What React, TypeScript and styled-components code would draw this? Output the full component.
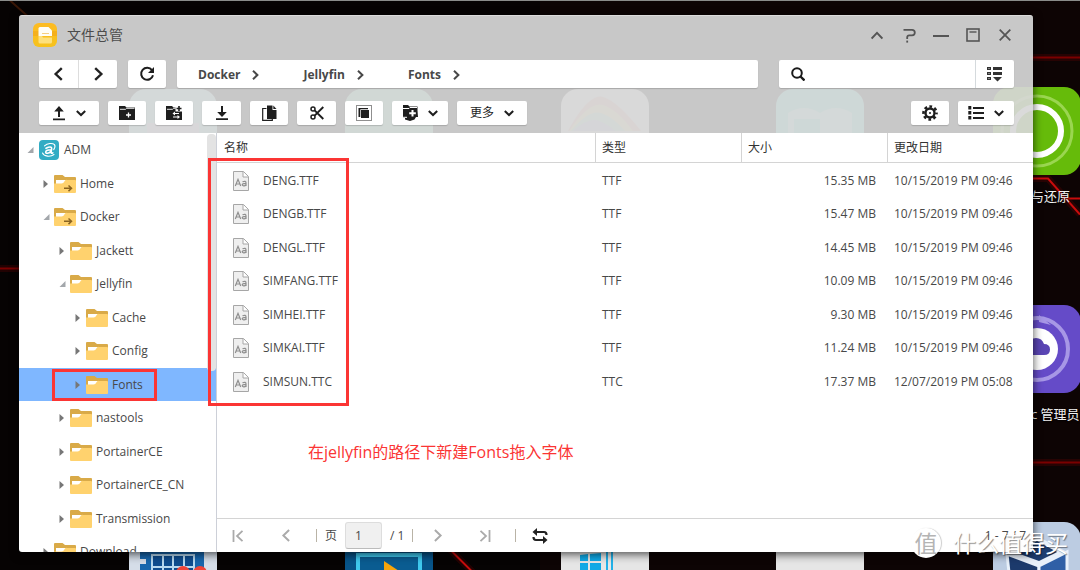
import React from "react";
import styled, { createGlobalStyle, css } from "styled-components";

const GlobalStyle = createGlobalStyle`
  *, *::before, *::after { box-sizing: border-box; }
  html, body, #root { height: 100%; }
  body {
    margin: 0;
    overflow: hidden;
    background: #060303;
    color: #484848;
    font: 12px/16px "Open Sans", "Noto Sans CJK SC", sans-serif;
  }
  button, input { font: inherit; color: inherit; }
  button { border: 0; padding: 0; background: none; cursor: pointer; }
  svg { display: block; flex: none; }
  ul { list-style: none; margin: 0; padding: 0; }
`;

/* ---------- Desktop ---------- */

const Desktop = styled.main`
  position: relative;
  height: 100vh;
  overflow: hidden;
  border-top: 1px solid #8a8c8a;
`;

const Wallpaper = styled.svg`
  position: absolute;
  inset: 0;
  width: 100%;
  height: 100%;
`;

const Shortcut = styled.div<{ $left: number; $top: number }>`
  position: absolute;
  left: ${(p) => p.$left}px;
  top: ${(p) => p.$top}px;
  width: 88px;
`;

const ShortcutLabel = styled.span<{ $indent: number }>`
  display: block;
  padding: 12px 0 0 ${(p) => p.$indent}px;
  font-size: 13px;
  line-height: 18px;
  white-space: nowrap;
  color: #f2f2f2;
  text-shadow: 0 1px 2px #000;
`;

/* ---------- Window ---------- */

const Window = styled.section`
  position: absolute;
  inset: 14px 47px 18px 19px;
  display: flex;
  flex-direction: column;
  border-radius: 3px;
  box-shadow: 0 2px 10px rgba(0, 0, 0, 0.7);
`;

const Header = styled.header`
  padding: 0 19px 8px 20px;
  border-radius: 3px 3px 0 0;
  border-top: 1px solid #dcdcdc;
  background: rgba(215, 215, 215, 0.93);
`;

const TitleBar = styled.div`
  display: flex;
  align-items: center;
  height: 44px;
  padding-bottom: 6px;
  margin: 0 -3px 0 -6px;
`;

const Title = styled.h1`
  flex: 1;
  margin: 0 0 0 10px;
  font-size: 14px;
  line-height: 20px;
  font-weight: 400;
  color: #4c4c4c;
`;

const Controls = styled.div`
  display: flex;
  gap: 8px;
`;

const ControlButton = styled.button`
  display: flex;
  align-items: center;
  justify-content: center;
  width: 24px;
  height: 24px;
  color: #555;
`;

const NavRow = styled.div`
  display: flex;
  gap: 11px;
  height: 28px;
  margin-bottom: 13px;
`;

const raised = css`
  background: #fff;
  border-radius: 2px;
  box-shadow: 0 1px 1px rgba(0, 0, 0, 0.16);
`;

const ButtonPair = styled.div`
  display: flex;
  ${raised}
`;

const PairButton = styled.button`
  display: flex;
  align-items: center;
  justify-content: center;
  width: 39px;
  color: #222;
  & + & { border-left: 1px solid #ddd; }
`;

const ToolButton = styled.button<{ $width?: number }>`
  display: flex;
  align-items: center;
  justify-content: center;
  gap: 10px;
  width: ${(p) => p.$width ?? 38}px;
  color: #1e1e1e;
  ${raised}
`;

const Breadcrumb = styled.nav`
  display: flex;
  align-items: center;
  flex: 1;
  gap: 43px;
  padding: 2px 0 0 21px;
  ${raised}
`;

const Crumb = styled.a`
  display: flex;
  align-items: center;
  gap: 10px;
  font-weight: 700;
  color: #484848;
  text-decoration: none;
`;

const Search = styled.form`
  display: flex;
  align-items: center;
  width: 235px;
  margin-left: 10px;
  padding-left: 12px;
  ${raised}
`;

const SearchInput = styled.input`
  flex: 1;
  min-width: 0;
  height: 28px;
  padding: 0 8px;
  border: 0;
  outline: 0;
  background: none;
`;

const SearchOptions = styled.button`
  display: flex;
  align-items: center;
  justify-content: center;
  width: 39px;
  height: 28px;
  border-left: 1px solid #d5dadd;
`;

const ToolRow = styled.div`
  display: flex;
  gap: 9px;
  height: 24px;
`;

const Spacer = styled.div`
  flex: 1;
`;

const Body = styled.div`
  display: flex;
  flex: 1;
  min-height: 0;
  overflow: hidden;
  border-radius: 0 0 3px 3px;
  background: #fff;
`;

/* ---------- Sidebar ---------- */

const Sidebar = styled.aside`
  position: relative;
  width: 198px;
  flex: none;
  overflow: hidden;
  border-right: 1px solid #cdd0d8;
`;

const ScrollThumb = styled.div`
  position: absolute;
  top: 1px;
  right: 0;
  width: 9px;
  height: 237px;
  border-radius: 4px;
  background: #e3e3e3;
`;

const TreeItem = styled.li<{ $level: number; $selected?: boolean }>`
  position: relative;
  display: flex;
  align-items: center;
  height: 33px;
  padding-left: ${(p) => 3 + p.$level * 16}px;
  background: ${(p) => (p.$selected ? "#7fb7ff" : "none")};
  &:nth-child(odd) { height: 34px; }
`;

const Toggle = styled.button`
  display: flex;
  align-items: center;
  justify-content: center;
  width: 16px;
  height: 16px;
`;

const NodeLink = styled.a`
  display: flex;
  align-items: center;
  gap: 4px;
  color: #484848;
  text-decoration: none;
  white-space: nowrap;
`;

/* ---------- File list ---------- */

const Content = styled.div`
  position: relative;
  display: flex;
  flex-direction: column;
  flex: 1;
  min-width: 0;
`;

const ListArea = styled.div`
  flex: 1;
  min-height: 0;
`;

const FileTable = styled.table`
  width: 100%;
  table-layout: fixed;
  border-collapse: separate;
  border-spacing: 0;
`;

const HeadCell = styled.th<{ $fixed?: boolean }>`
  height: 30px;
  width: ${(p) => (p.$fixed ? "146px" : "auto")};
  padding: 1px 0 0 ${(p) => (p.$fixed ? 6 : 7)}px;
  border-left: ${(p) => (p.$fixed ? "1px solid #d4d4d4" : "0")};
  border-bottom: 1px solid #d4d4d4;
  text-align: left;
  font-weight: 400;
  color: #333;
`;

const FileRow = styled.tr`
  height: 33px;
  &:nth-child(odd) { height: 34px; }
`;

const Cell = styled.td<{ $right?: boolean }>`
  padding: 1px ${(p) => (p.$right ? 11 : 0)}px 0 7px;
  text-align: ${(p) => (p.$right ? "right" : "left")};
  white-space: nowrap;
`;

const FileName = styled.div`
  display: flex;
  align-items: center;
  gap: 14px;
  padding-left: 9px;
`;

/* ---------- Pager ---------- */

const Pager = styled.footer`
  display: flex;
  align-items: center;
  height: 34px;
  padding: 0 7px 0 9px;
  border-top: 1px solid #d4d4d4;
`;

const PagerGroup = styled.div<{ $inset?: boolean }>`
  display: flex;
  gap: 24px;
  padding: 0 18px 0 ${(p) => (p.$inset ? 12 : 0)}px;
`;

const PagerButton = styled.button<{ $dark?: boolean }>`
  display: flex;
  align-items: center;
  justify-content: center;
  width: 24px;
  height: 24px;
  color: ${(p) => (p.$dark ? "#222" : "#aaa")};
`;

const Divider = styled.span`
  width: 1px;
  height: 13px;
  background: #b9b3a6;
`;

const PageLabel = styled.label`
  display: flex;
  align-items: center;
  gap: 8px;
  padding: 0 8px;
`;

const PageInput = styled.input`
  width: 37px;
  height: 27px;
  padding: 0 9px;
  border: 1px solid #ddd;
  border-bottom-color: #bbb;
  border-radius: 3px;
  background: #f0f0f0;
`;

/* ---------- Annotations over the window ---------- */

const Marker = styled.div<{ $left: number; $top: number; $width: number; $height: number }>`
  position: absolute;
  z-index: 2;
  left: ${(p) => p.$left}px;
  top: ${(p) => p.$top}px;
  width: ${(p) => p.$width}px;
  height: ${(p) => p.$height}px;
  border: 3px solid #fb3534;
  pointer-events: none;
`;

const Note = styled.p`
  position: absolute;
  left: 91px;
  top: 308px;
  margin: 0;
  font-size: 16px;
  line-height: 22px;
  color: #fb3534;
`;

const Watermark = styled.div`
  position: absolute;
  z-index: 3;
  right: 12px;
  bottom: 12px;
  display: flex;
  align-items: center;
  gap: 12px;
  color: #fff;
  font-size: 23px;
  line-height: 30px;
  text-shadow: 1px 1px 1px rgba(0, 0, 0, 0.45);
`;

const Seal = styled.span`
  display: flex;
  align-items: center;
  justify-content: center;
  width: 30px;
  height: 30px;
  border-radius: 50%;
  background: #fff;
  box-shadow: 1px 0 1px rgba(0, 0, 0, 0.2);
  color: #b4b4b4;
  font-size: 23px;
  text-shadow: none;
`;

/* ---------- Icons ---------- */

const Chevron = ({ dir = "right", size = 10, weight = 2 }: { dir?: string; size?: number; weight?: number }) => {
  const d: Record<string, string> = {
    right: "M3 0.8 7.4 5 3 9.2",
    left: "M7 0.8 2.6 5 7 9.2",
    down: "M0.8 3 5 7 9.2 3",
    up: "M0.5 8 5 3.2 9.5 8",
  };
  return (
    <svg width={size} height={size} viewBox="0 0 10 10" fill="none" stroke="currentColor" strokeWidth={weight}>
      <path d={d[dir]} />
    </svg>
  );
};

const AppIcon = () => (
  <svg width="24" height="24" viewBox="0 0 24 24">
    <defs>
      <linearGradient id="appYellow" x1="0" y1="0" x2="0" y2="1">
        <stop offset="0" stopColor="#fdbb22" />
        <stop offset="1" stopColor="#f6c21c" />
      </linearGradient>
    </defs>
    <rect width="24" height="24" rx="6" fill="url(#appYellow)" />
    <rect y="8" width="24" height="5" fill="#f0a21a" opacity="0.5" />
    <path d="M5.500 5.500q0-1.500 1.500-1.500h8.500l3.500 3.500V13H5.500Z" fill="#fffdf6" />
    <path d="M9 10.500h7" stroke="#f6cf80" />
    <path d="M5.500 13h3.500l1 1.500h9V19q0 1.500-1.500 1.500H7q-1.500 0-1.500-1.500Z" fill="#fde07c" />
  </svg>
);

const HelpIcon = () => (
  <svg width="13" height="15" viewBox="0 0 13 15" fill="none" stroke="currentColor" strokeWidth="1.800">
    <path d="M0.500 1.800H9Q11.800 1.800 11.800 4.500T9 7.300H6.200Q4.200 7.300 4.200 9.300V11" />
    <path d="M4.200 12.600v2" />
  </svg>
);
const MinimizeIcon = () => (
  <svg width="16" height="12" viewBox="0 0 16 12"><path d="M0 7h16" stroke="currentColor" strokeWidth="2" /></svg>
);
const MaximizeIcon = () => (
  <svg width="14" height="14" viewBox="0 0 14 14" fill="none" stroke="currentColor">
    <rect x="1" y="1" width="12" height="12" strokeWidth="1.600" />
    <path d="M3.500 4h7" strokeWidth="1.400" />
  </svg>
);
const CloseIcon = () => (
  <svg width="12" height="12" viewBox="0 0 12 12"><path d="m0.700 0.700 10.600 10.600M11.300 0.700 0.700 11.300" stroke="currentColor" strokeWidth="1.800" /></svg>
);
const ReloadIcon = () => (
  <svg width="16" height="16" viewBox="0 0 16 16" fill="none" stroke="currentColor" strokeWidth="2">
    <path d="M13 4.200A6 6 0 1 0 14 9.200" />
    <path d="M15 1v6H9Z" fill="currentColor" stroke="none" />
  </svg>
);
const SearchIcon = () => (
  <svg width="14" height="14" viewBox="0 0 14 14" fill="none" stroke="#1a1a1a" strokeWidth="2">
    <circle cx="6" cy="6" r="4.800" />
    <path d="m9.500 9.500 4 4" strokeWidth="2.400" />
  </svg>
);
const FilterIcon = () => (
  <svg width="16" height="16" viewBox="0 0 16 16" fill="#333">
    <path d="M6 1h9v3H6zM6 6h9v3H6zM6 11h9l-4.500 4.500z" />
    <path d="M.6 1.600h2.800v1.800H.6zM.6 6.600h2.800v1.800H.6zM.6 11.600h2.800v1.800H.6z" fill="none" stroke="#333" strokeWidth="1.200" />
  </svg>
);
const UploadIcon = () => (
  <svg width="14" height="16" viewBox="0 0 14 16" fill="currentColor">
    <path d="M7 1 11.800 6.500H8V12H6V6.500H2.200ZM1 13.500h12v1.800H1z" />
  </svg>
);
const DownloadIcon = () => (
  <svg width="14" height="16" viewBox="0 0 14 16" fill="currentColor">
    <path d="M6 1h2v6h3.800L7 12 2.200 7H6ZM1 13.200h12V15H1z" />
  </svg>
);
const NewFolderIcon = () => (
  <svg width="16" height="14" viewBox="0 0 16 14">
    <path d="M0 0h6l1.500 1.500H16V14H0z" fill="currentColor" />
    <path d="M1 3.300h5.500l1.200-1H15.500" stroke="#fff" strokeWidth="0.900" fill="none" />
    <path d="M9.500 6.500v5M7 9h5" stroke="#fff" strokeWidth="1.300" />
  </svg>
);
const ShareFolderIcon = () => (
  <svg width="16" height="14" viewBox="0 0 16 14">
    <path d="M0 0h6l1.500 1.500H9.500V5.500H16V14H0z" fill="currentColor" />
    <path d="M1 3.300h5.500l1.200-1H9.500" stroke="#fff" strokeWidth="0.900" fill="none" />
    <path d="M13 0v5M10.500 2.500h5" stroke="currentColor" strokeWidth="1.600" />
    <path d="M8 7.500h5M7 11h5" stroke="#fff" strokeWidth="1.200" />
    <path d="M9 5.500v4L6.500 7.500zM11.500 9v4l2.500-2z" fill="#fff" />
  </svg>
);
const CopyIcon = () => (
  <svg width="15" height="16" viewBox="0 0 15 16">
    <path d="M4.500 3.500H.7v11.800h9.600V14" fill="none" stroke="currentColor" strokeWidth="1.200" />
    <path d="M5 .5h5.500V5H14.500v9H5z" fill="currentColor" />
    <path d="M11.300.5 14.500 4h-3.200z" fill="currentColor" />
  </svg>
);
const CutIcon = () => (
  <svg width="14" height="14" viewBox="0 0 14 14" fill="none" stroke="currentColor" strokeWidth="1.500">
    <circle cx="3" cy="3" r="2" />
    <circle cx="3" cy="11" r="2" />
    <path d="M4.600 4.300 13.300 13M4.600 9.700 13.300 1" strokeWidth="1.900" />
  </svg>
);
const SelectAllIcon = () => (
  <svg width="16" height="16" viewBox="0 0 16 16">
    <rect x=".5" y=".5" width="15" height="15" fill="none" stroke="currentColor" strokeDasharray="1 1" />
    <path d="M2.500 3h9.500v1.300H4.300V12H2.500zM5 5h8v8H5z" fill="currentColor" />
  </svg>
);
const DriveIcon = () => (
  <svg width="16" height="16" viewBox="0 0 16 16">
    <path d="M1 0h5l1.500 1.500H15.500V5.500L16 12H14l-1.500 2.500L8 16l-5-1.500V13H1z" fill="currentColor" />
    <path d="M1 3.500h6l1-1h7M0 12.300h5" stroke="#fff" strokeWidth="1" fill="none" />
    <path d="M10.500 5v6.500M7.200 8.200h6.600" stroke="#fff" strokeWidth="2" />
  </svg>
);
const GearIcon = () => (
  <svg width="16" height="16" viewBox="0 0 16 16" fill="none" stroke="currentColor">
    <circle cx="8" cy="8" r="6.500" strokeWidth="2.600" strokeDasharray="2.700 2.400" strokeDashoffset="1.350" />
    <circle cx="8" cy="8" r="4.500" strokeWidth="2.400" />
    <circle cx="8" cy="8" r="1" fill="currentColor" stroke="none" />
  </svg>
);
const ListIcon = () => (
  <svg width="16" height="14" viewBox="0 0 16 14" stroke="currentColor" fill="none">
    <path d="M5 2h11M5 7h11M5 12h11" strokeWidth="2" />
    <path d="M1.800 0v14" strokeWidth="3" strokeDasharray="3.500 1.500" />
  </svg>
);
const Arrow = ({ open }: { open?: boolean }) => (
  <svg width="7" height="8" viewBox="0 0 7 8">
    {open ? <path d="M6.500 1v6h-6z" fill="#a3a7ab" /> : <path d="M.5 0 5 4l-4.500 4z" fill="#777" />}
  </svg>
);
const AdmIcon = () => (
  <svg width="22" height="20" viewBox="0 0 22 20">
    <rect x="1" width="20" height="20" rx="4" fill="#31acc4" />
    <g fill="none" stroke="#fff" strokeLinecap="round">
      <path d="M8 8.300q4.500-2.300 5.500-.6c.7 1.300-.8 4-.3 5.300q.4.700 1.600-.2M13.200 9.800c-3 0-5.500.8-5.500 2.400s3 1.600 5.200-1" strokeWidth="1.600" />
      <path d="M6.500 5.800c3-2.800 8-3 10-1.200.8 1.200.3 3.400-.8 5M4.500 13c1.500 3.600 8 4.200 11.500 1.500" strokeWidth="1.100" />
    </g>
  </svg>
);
const FolderIcon = ({ linked }: { linked?: boolean }) => (
  <svg width="22" height="18" viewBox="0 0 22 18">
    <path d="M0 1q0-1 1-1h7.500l2.500 2h10q1 0 1 1v7H0z" fill="#d9aa48" />
    <path d="M2 5h18v4H2z" fill="#fff" />
    <path d="M0 8.500h7.500Q9.500 8.500 10.500 6.300T13 5h8q1 0 1 1v11q0 1-1 1H1q-1 0-1-1z" fill="#ffd26e" />
    {linked && <path d="M10 13.300h7M14.500 10.500l3 2.800-3 2.800" fill="none" stroke="#8a6421" strokeWidth="1.500" />}
  </svg>
);
const FontFileIcon = () => (
  <svg width="16" height="20" viewBox="0 0 16 20" fill="none" stroke="#a6a6a6">
    <path d="M.5.500H10.500L15.500 5.500V19.500H.5z" fill="#efefef" />
    <path d="M10 .8V6h5.200" fill="#fff" />
    <path d="M2.300 15 5 8.300 7.700 15M3.200 13h3.600" stroke="#8f8f8f" strokeWidth="1.200" />
    <path d="M9.500 10.800q3.500-1.400 3.500 1.200v3M13 12.400c-2.500 0-3.800.4-3.800 1.400s2.500 1.800 3.800 0" stroke="#8f8f8f" strokeWidth="1.200" />
  </svg>
);
const EndIcon = ({ first }: { first?: boolean }) => (
  <svg width="12" height="12" viewBox="0 0 12 12" fill="none" stroke="currentColor" strokeWidth="1.800">
    <path d={first ? "M1.500 0v12M10.500.8 5 6l5.500 5.200" : "M10.500 0v12M1.500.8 7 6l-5.500 5.200"} />
  </svg>
);
const SyncIcon = () => (
  <svg width="16" height="16" viewBox="0 0 16 16" fill="currentColor">
    <path d="M5 0v8L.5 4zM11 8v8l4.500-4z" />
    <path d="M4 4h8q2.500 0 2.500 3M12 12H4q-2.500 0-2.500-3" fill="none" stroke="currentColor" strokeWidth="2.200" />
  </svg>
);

/* ---------- Desktop shortcuts artwork ---------- */

const Tile = ({ fill, children }: { fill: string; children?: React.ReactNode }) => (
  <svg width="88" height="88" viewBox="0 0 88 88">
    <rect width="88" height="88" rx="17" fill={fill} />
    {children}
  </svg>
);

const shortcuts: { left: number; top: number; art: React.ReactNode; label?: string; indent?: number }[] = [
  { left: 129, top: 88, art: <Tile fill="#a9e6ea"><path d="M18 34h52v54H18z" fill="#dcd0e8" /></Tile> },
  { left: 345, top: 88, art: <Tile fill="#7fe0b4" /> },
  {
    left: 561, top: 88,
    art: (
      <Tile fill="#e6e6e6">
        <path d="M7 42Q28 4 42 8T80 42z" fill="#f2a49c" />
        <path d="M8 42Q28 12 42 16T72 42z" fill="#eedc9a" />
        <path d="M10 42Q28 20 40 24T64 42z" fill="#a4dcc4" />
        <path d="M12 42Q28 28 38 32T54 42z" fill="#b4b4e4" />
      </Tile>
    ),
  },
  {
    left: 776, top: 88,
    art: (
      <Tile fill="#5cdcd0">
        <path d="M12 24q16-10 32 0 16-10 32 0v50H12z" fill="#a8eee6" />
        <path d="M18 30h26v30H18z" fill="#5cdcd0" />
      </Tile>
    ),
  },
  {
    left: 993, top: 86, label: "与还原", indent: 38,
    art: (
      <Tile fill="#66bb0a">
        <circle cx="44" cy="44" r="35" fill="none" stroke="#9ad650" strokeWidth="3" />
        <circle cx="44" cy="44" r="24" fill="none" stroke="#fff" strokeWidth="6" />
      </Tile>
    ),
  },
  {
    left: 993, top: 304, label: "c 管理员", indent: 38,
    art: (
      <Tile fill="#654bc8">
        <circle cx="44" cy="44" r="31" fill="none" stroke="#a797e6" strokeWidth="4" />
        <path d="M46 10 58 20 46 17z" fill="#a797e6" />
        <circle cx="44" cy="44" r="21" fill="#fff" />
        <path d="M35 50q-6 0-6-5t6-5q2-7 8-7t8 6q6 0 6 5.500T51 50z" fill="#5a45b4" />
      </Tile>
    ),
  },
  {
    left: 129, top: 522,
    art: (
      <Tile fill="#d5dde8">
        <path d="M11 20h64v68H11z" fill="#1766ad" />
        <path d="M11 36h6v5h-6z" fill="#d5dde8" />
        <path d="M23 32h42v30H23zM34 32v30M44 32v30M55 32v30M23 44h42" fill="#0f4d8f" stroke="#b8d9f0" strokeWidth="2" />
        <circle cx="54" cy="50" r="7" fill="#ef4438" />
        <circle cx="71" cy="50" r="7" fill="#ef4438" />
      </Tile>
    ),
  },
  {
    left: 345, top: 522,
    art: (
      <Tile fill="#075388">
        <path d="M13 32h62v50H13z" fill="#0a5c91" stroke="#3fc8ee" strokeWidth="4" />
        <path d="M39 38v24l18-12z" fill="#f7a50a" />
      </Tile>
    ),
  },
  {
    left: 561, top: 522,
    art: (
      <Tile fill="#e6e6e6">
        <path d="M19 32l8-1v7h-8zM29 31l11-1v8H29zM19 40h8v7h-8zM29 40h11v8H29z" fill="#10a9e6" />
        <path d="M46 29v30M51 29v30" stroke="#23b1e8" strokeWidth="2" />
      </Tile>
    ),
  },
  { left: 776, top: 522, art: <Tile fill="#e6e6e6" /> },
  {
    left: 993, top: 521,
    art: (
      <Tile fill="#bccce2">
        <path d="M14 32 44 14 74 30 46 44z" fill="#e8f0fa" />
        <path d="M24 31 44 19 64 30 46 39z" fill="#1d3d70" />
        <path d="M14 32 46 44V88H20z" fill="#1c3a6c" stroke="#e8f0fa" strokeWidth="3" />
        <path d="M46 44 74 30V88H46z" fill="#2f5fa6" stroke="#e8f0fa" strokeWidth="3" />
      </Tile>
    ),
  },
];

const Laser = () => (
  <Wallpaper viewBox="0 0 1080 570" preserveAspectRatio="xMidYMid slice" aria-hidden="true">
    <path d="M540 0h540v570H540z" fill="#120505" opacity="0.6" />
    <g fill="none" stroke="#900000">
      <g strokeWidth="7" opacity="0.2">
        <path d="M0 268h30M1030 57h50M1030 462h50M1030 178h18l32 36M450 549l24 24" />
      </g>
      <g strokeWidth="2">
        <path d="M0 268h30M1030 57h50M1030 462h50" opacity="0.8" />
        <path d="M1030 178h18l32 36M450 549l24 24M1062 198h18" stroke="#c80c0c" />
        <path d="m10 0 18 16" stroke="#6b2a0a" opacity="0.5" />
      </g>
    </g>
  </Wallpaper>
);

/* ---------- Data ---------- */

const tree: { name: string; level: number; open?: boolean; icon?: "adm" | "linked"; selected?: boolean }[] = [
  { name: "ADM", level: 0, open: true, icon: "adm" },
  { name: "Home", level: 1, icon: "linked" },
  { name: "Docker", level: 1, open: true, icon: "linked" },
  { name: "Jackett", level: 2 },
  { name: "Jellyfin", level: 2, open: true },
  { name: "Cache", level: 3 },
  { name: "Config", level: 3 },
  { name: "Fonts", level: 3, selected: true },
  { name: "nastools", level: 2 },
  { name: "PortainerCE", level: 2 },
  { name: "PortainerCE_CN", level: 2 },
  { name: "Transmission", level: 2 },
  { name: "Download", level: 1, icon: "linked" },
];

const files = [
  ["DENG.TTF", "TTF", "15.35 MB", "10/15/2019 PM 09:46"],
  ["DENGB.TTF", "TTF", "15.47 MB", "10/15/2019 PM 09:46"],
  ["DENGL.TTF", "TTF", "14.45 MB", "10/15/2019 PM 09:46"],
  ["SIMFANG.TTF", "TTF", "10.09 MB", "10/15/2019 PM 09:46"],
  ["SIMHEI.TTF", "TTF", "9.30 MB", "10/15/2019 PM 09:46"],
  ["SIMKAI.TTF", "TTF", "11.24 MB", "10/15/2019 PM 09:46"],
  ["SIMSUN.TTC", "TTC", "17.37 MB", "12/07/2019 PM 05:08"],
];

export default function App() {
  return (
    <>
      <GlobalStyle />
      <Desktop>
        <Laser />
        {shortcuts.map((s) => (
          <Shortcut key={`${s.left}-${s.top}`} $left={s.left} $top={s.top}>
            {s.art}
            {s.label && <ShortcutLabel $indent={s.indent ?? 0}>{s.label}</ShortcutLabel>}
          </Shortcut>
        ))}

        <Window>
          <Header>
            <TitleBar>
              <AppIcon />
              <Title>文件总管</Title>
              <Controls>
                <ControlButton aria-label="Collapse"><Chevron dir="up" size={12} weight={1.6} /></ControlButton>
                <ControlButton aria-label="Help"><HelpIcon /></ControlButton>
                <ControlButton aria-label="Minimize"><MinimizeIcon /></ControlButton>
                <ControlButton aria-label="Maximize"><MaximizeIcon /></ControlButton>
                <ControlButton aria-label="Close"><CloseIcon /></ControlButton>
              </Controls>
            </TitleBar>

            <NavRow>
              <ButtonPair>
                <PairButton aria-label="Back"><Chevron dir="left" size={14} weight={1.7} /></PairButton>
                <PairButton aria-label="Forward"><Chevron size={14} weight={1.7} /></PairButton>
              </ButtonPair>
              <ToolButton aria-label="Reload"><ReloadIcon /></ToolButton>
              <Breadcrumb aria-label="Path">
                {["Docker", "Jellyfin", "Fonts"].map((name) => (
                  <Crumb key={name} href="#">
                    {name}
                    <Chevron />
                  </Crumb>
                ))}
              </Breadcrumb>
              <Search role="search">
                <SearchIcon />
                <SearchInput type="text" aria-label="Search" />
                <SearchOptions type="button" aria-label="Search options"><FilterIcon /></SearchOptions>
              </Search>
            </NavRow>

            <ToolRow>
              <ToolButton $width={60} aria-label="Upload"><UploadIcon /><Chevron dir="down" /></ToolButton>
              <ToolButton aria-label="New folder"><NewFolderIcon /></ToolButton>
              <ToolButton aria-label="New shared folder"><ShareFolderIcon /></ToolButton>
              <ToolButton $width={39} aria-label="Download"><DownloadIcon /></ToolButton>
              <ToolButton aria-label="Copy"><CopyIcon /></ToolButton>
              <ToolButton $width={39} aria-label="Cut"><CutIcon /></ToolButton>
              <ToolButton aria-label="Select all"><SelectAllIcon /></ToolButton>
              <ToolButton $width={56} aria-label="Virtual drive"><DriveIcon /><Chevron dir="down" /></ToolButton>
              <ToolButton $width={70}>更多<Chevron dir="down" /></ToolButton>
              <Spacer />
              <ToolButton aria-label="Settings"><GearIcon /></ToolButton>
              <ToolButton $width={56} aria-label="View"><ListIcon /><Chevron dir="down" /></ToolButton>
            </ToolRow>
          </Header>

          <Body>
            <Sidebar>
              <ul>
                {tree.map((n) => (
                  <TreeItem key={n.name} $level={n.level} $selected={n.selected}>
                    <Toggle aria-label={`Toggle ${n.name}`}><Arrow open={n.open} /></Toggle>
                    <NodeLink href="#">
                      {n.icon === "adm" ? <AdmIcon /> : <FolderIcon linked={n.icon === "linked"} />}
                      {n.name}
                    </NodeLink>
                    {n.selected && <Marker $left={33} $top={1} $width={105} $height={32} />}
                  </TreeItem>
                ))}
              </ul>
              <ScrollThumb />
            </Sidebar>

            <Content>
              <ListArea>
                <FileTable>
                  <thead>
                    <tr>
                      <HeadCell>名称</HeadCell>
                      <HeadCell $fixed>类型</HeadCell>
                      <HeadCell $fixed>大小</HeadCell>
                      <HeadCell $fixed>更改日期</HeadCell>
                    </tr>
                  </thead>
                  <tbody>
                    {files.map(([name, type, size, date]) => (
                      <FileRow key={name}>
                        <Cell><FileName><FontFileIcon />{name}</FileName></Cell>
                        <Cell>{type}</Cell>
                        <Cell $right>{size}</Cell>
                        <Cell>{date}</Cell>
                      </FileRow>
                    ))}
                  </tbody>
                </FileTable>
              </ListArea>

              <Pager>
                <PagerGroup>
                  <PagerButton aria-label="First page"><EndIcon first /></PagerButton>
                  <PagerButton aria-label="Previous page"><Chevron dir="left" size={13} weight={1.5} /></PagerButton>
                </PagerGroup>
                <Divider />
                <PageLabel>
                  页
                  <PageInput type="text" defaultValue="1" />
                  / 1
                </PageLabel>
                <Divider />
                <PagerGroup $inset>
                  <PagerButton aria-label="Next page"><Chevron size={13} weight={1.5} /></PagerButton>
                  <PagerButton aria-label="Last page"><EndIcon /></PagerButton>
                </PagerGroup>
                <Divider />
                <PagerGroup $inset>
                  <PagerButton $dark aria-label="Refresh list"><SyncIcon /></PagerButton>
                </PagerGroup>
                <Spacer />
                <span>1 - 7 / 7</span>
              </Pager>

              <Marker $left={-9} $top={25} $width={141} $height={248} />
              <Note>在jellyfin的路径下新建Fonts拖入字体</Note>
            </Content>
          </Body>
        </Window>

        <Watermark>
          <Seal>值</Seal>
          什么值得买
        </Watermark>
      </Desktop>
    </>
  );
}
